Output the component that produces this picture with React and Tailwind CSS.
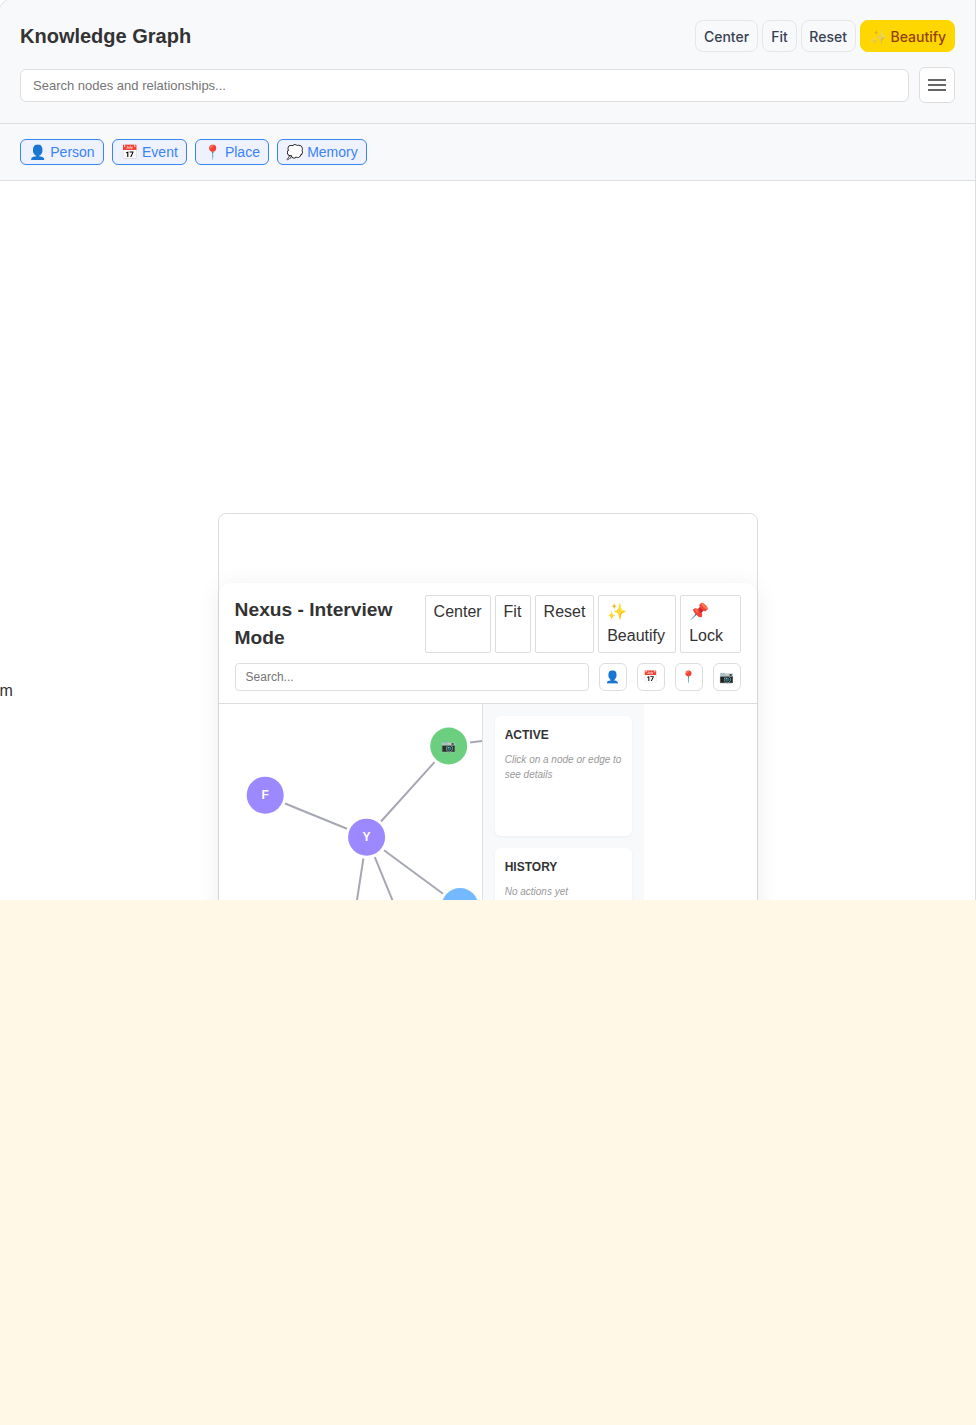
import React from "react";

const filters = [
  ["👤", "Person", "w-[84px]"],
  ["📅", "Event", "w-[75px]"],
  ["📍", "Place", "w-[74px]"],
  ["💭", "Memory", "w-[90px]"],
];

const topButton =
  "h-8 rounded-lg border border-[#e5e7eb] pt-px font-['Inter',sans-serif] text-sm font-medium text-[#374151]";
const nexusButton =
  "flex rounded-[2px] border border-[#dddddd] bg-white py-1 pl-[7.6px] text-left text-base leading-6 text-[#333333]";

function Header() {
  return (
    <header className="h-[124px] border-b border-[#dddddd] px-5 pt-5">
      <div className="flex h-8 items-center justify-between">
        <h1 className="text-xl font-bold text-[#333333]">Knowledge Graph</h1>
        <div className="flex gap-1">
          <button className={topButton + " w-[63px]"}>Center</button>
          <button className={topButton + " w-[35px]"}>Fit</button>
          <button className={topButton + " w-[55px] pr-[0.8px]"}>Reset</button>
          <button className="h-8 w-[95px] whitespace-nowrap rounded-lg border border-[#ffd700] bg-[#ffd700] pl-[0.8px] pt-px font-['Inter',sans-serif] text-sm font-medium text-[#92400e]">
            <span className="inline-block brightness-95 saturate-75">✨</span> Beautify
          </button>
        </div>
      </div>
      <div className="mt-[15px] flex items-center gap-2.5">
        <input
          className="h-[33px] min-w-0 flex-1 rounded-md border border-[#dddddd] bg-white px-3 text-[13px] placeholder:text-[#757575]"
          placeholder="Search nodes and relationships..."
        />
        <button
          aria-label="Menu"
          className="flex size-9 flex-col items-center justify-center gap-[3px] rounded-md border border-[#dddddd] bg-white"
        >
          <span className="h-0.5 w-[18px] bg-[#666666]" />
          <span className="h-0.5 w-[18px] bg-[#666666]" />
          <span className="h-0.5 w-[18px] bg-[#666666]" />
        </button>
      </div>
    </header>
  );
}

function Graph() {
  return (
    <svg className="block h-[200px] w-[263px] shrink-0" viewBox="219 704 263 200">
      <g stroke="#a5a8b3" strokeWidth="2">
        <path d="M285 803.5 347 828.7M381 821.5 434.5 762.2M470 742.6 484 740.7M384 850.3 443 893.7M363.4 858.5 356.4 904M374.8 857.2 394 904" />
      </g>
      <circle cx="265.2" cy="795.2" r="18.5" fill="#9c88ff" />
      <circle cx="366.6" cy="837.2" r="18.5" fill="#9c88ff" />
      <circle cx="448.7" cy="746" r="18.5" fill="#6bcf7f" />
      <circle cx="460" cy="906.5" r="18.5" fill="#74b9ff" />
      <g
        fill="#ffffff"
        fontSize="12"
        fontWeight="700"
        textAnchor="middle"
        fontFamily="'Liberation Sans', sans-serif"
      >
        <text x="265.2" y="799">F</text>
        <text x="366.6" y="841">Y</text>
        <text x="448.7" y="750" opacity="0.9">📷</text>
      </g>
    </svg>
  );
}

function SideCard({ title, children }) {
  return (
    <div className="h-[120px] shrink-0 rounded-md bg-white py-2.5 pl-[9.7px] pr-2.5 shadow-[0_1px_3px_rgba(0,0,0,0.05)]">
      <h3 className="mb-2 text-xs font-bold leading-[18px] text-[#333333]">{title}</h3>
      <p className="text-[10px] italic leading-[15px] text-[#999999]">{children}</p>
    </div>
  );
}

function Nexus() {
  return (
    <div className="h-[400px] w-[540px] rounded-lg border border-[#dddddd] pt-[69px]">
      <div className="h-[600px] rounded-xl bg-white shadow-[0_4px_24px_rgba(0,0,0,0.08)]">
        <div className="h-[121px] border-b border-[#dddddd] px-4 pt-3">
          <div className="flex h-[58px] justify-between">
            <h2 className="-ml-[0.4px] w-[180px] pt-px text-[19.2px] font-bold leading-7 text-[#333333]">
              Nexus - Interview Mode
            </h2>
            <div className="flex gap-1">
              <button className={nexusButton + " w-[66px]"}>Center</button>
              <button className={nexusButton + " w-9"}>Fit</button>
              <button className={nexusButton + " w-[59px]"}>Reset</button>
              <button className={nexusButton + " w-[78px] flex-col"}>
                <span>✨</span>
                <span className="pl-[0.6px]">Beautify</span>
              </button>
              <button className={nexusButton + " w-[61px] flex-col"}>
                <span>📌</span>
                <span className="pl-[0.6px]">Lock</span>
              </button>
            </div>
          </div>
          <div className="mt-2.5 flex gap-2.5">
            <input
              className="h-7 min-w-0 flex-1 rounded border border-[#dddddd] bg-white px-[9.6px] text-xs placeholder:text-[#757575]"
              placeholder="Search..."
            />
            {["👤", "📅", "📍", "📷"].map((icon) => (
              <button
                key={icon}
                className="flex size-7 items-center justify-center rounded-md border border-[#dddddd] bg-white pr-px text-xs text-[#333333]"
              >
                {icon}
              </button>
            ))}
          </div>
        </div>
        <div className="flex h-[300px]">
          <Graph />
          <aside className="flex w-[162px] flex-col gap-3 border-l border-[#dcdfe5] bg-[#f8f9fb] p-3">
            <SideCard title="ACTIVE">Click on a node or edge to see details</SideCard>
            <SideCard title="HISTORY">No actions yet</SideCard>
          </aside>
        </div>
      </div>
    </div>
  );
}

export default function App() {
  return (
    <div className="h-[1425px] overflow-hidden bg-[#fff8e7] font-['Liberation_Sans',sans-serif]">
      <div className="h-[900px] overflow-hidden bg-white">
        <div className="-ml-px -mt-px h-[960px] overflow-hidden rounded-tl-xl border border-[#dddddd] bg-white">
          <div className="bg-[#f8f9fb]">
            <Header />
            <nav className="flex h-[57px] items-start gap-2 border-b border-[#dddddd] px-5 pt-[15px]">
              {filters.map(([icon, label, width]) => (
                <button
                  key={label}
                  className={
                    "h-[26px] whitespace-nowrap rounded-md border border-[#3b82f6] bg-[#eef2ff] text-sm leading-6 text-[#3b82f6] " +
                    width
                  }
                >
                  {icon} {label}
                </button>
              ))}
            </nav>
          </div>
          <main className="flex items-start pt-[332px]">
            <p className="w-[218px] shrink-0 pt-[166px] text-base leading-6 text-[#333333]">
              <span className="-ml-[0.6px]">m</span>
            </p>
            <Nexus />
          </main>
        </div>
      </div>
    </div>
  );
}
